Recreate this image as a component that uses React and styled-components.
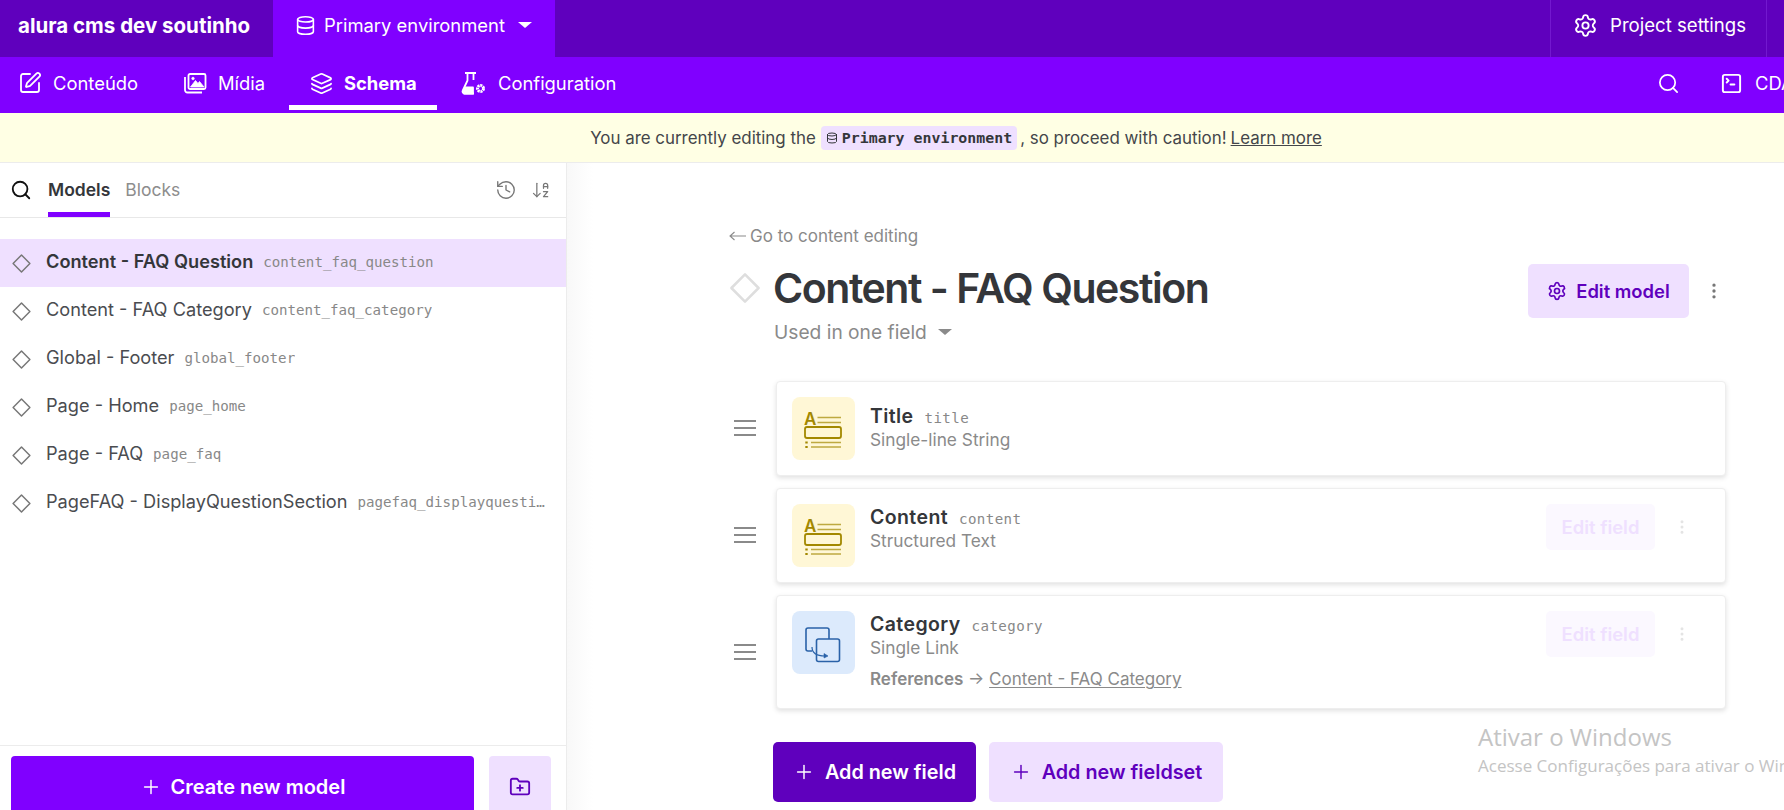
import React from 'react'
import styled, { createGlobalStyle } from 'styled-components'
import {
  SquarePen, Layers, Database, Settings, Search, SquareTerminal,
  History, ArrowDownAZ, Plus, FolderPlus, EllipsisVertical,
} from 'lucide-react'

const Global = createGlobalStyle`
  html, body { margin: 0; padding: 0; background: #fff; overflow: hidden; }
  body { font-family: Inter, "Liberation Sans", sans-serif; color: #34363a; }
  * { box-sizing: border-box; }
`

const Page = styled.div`
  width: 1784px;
  height: 810px;
  overflow: hidden;
  position: relative;
  display: flex;
  flex-direction: column;
`

const TopBar = styled.div`
  height: 57px;
  flex: none;
  background: #5f00bd;
  color: #fff;
  display: flex;
`
const Brand = styled.div`
  width: 273px;
  padding: 0 0 7px 18px;
  display: flex;
  align-items: center;
  font-size: 20.5px;
  font-weight: 700;
`
const EnvTab = styled.div`
  width: 282px;
  background: #8000ff;
  padding: 0 0 7px 22px;
  display: flex;
  align-items: center;
  gap: 8px;
  font-size: 18.4px;
  svg { flex: none; }
`
const Caret = styled.span`
  display: inline-block;
  width: 0;
  height: 0;
  margin-left: ${p => p.$gap || 5}px;
  border-left: ${p => p.$size || 7}px solid transparent;
  border-right: ${p => p.$size || 7}px solid transparent;
  border-top: ${p => (p.$size || 7) - 1}px solid currentColor;
`
const TopSpacer = styled.div`
  flex: 1;
`
const SettingsCell = styled.div`
  width: 217px;
  padding: 0 0 7px 22px;
  display: flex;
  align-items: center;
  gap: 12px;
  font-size: 18.6px;
  border-left: 1px solid #7318cf;
  border-right: 1px solid #7318cf;
`
const TopEnd = styled.div`
  width: 17px;
`

const NavBar = styled.div`
  height: 56px;
  flex: none;
  background: #8000ff;
  color: #fff;
  display: flex;
`
const NavItem = styled.div`
  height: 56px;
  width: ${p => p.$w}px;
  padding-left: ${p => p.$pad}px;
  padding-bottom: 4px;
  display: flex;
  align-items: center;
  gap: ${p => p.$gap || 11}px;
  font-size: 18.4px;
  font-weight: ${p => (p.$active ? 700 : 400)};
  box-shadow: ${p => (p.$active ? 'inset 0 -3px 0 #8000ff, inset 0 -8px 0 #fff' : 'none')};
  svg { flex: none; }
`
const NavRight = styled.div`
  margin-left: auto;
  width: 127px;
  padding-bottom: 4px;
  overflow: hidden;
  display: flex;
  align-items: center;
  white-space: nowrap;
  font-size: 18.4px;
  gap: 40px;
  svg { flex: none; }
`
const Cda = styled.span`
  display: inline-flex;
  align-items: center;
  gap: 12px;
`

const Notice = styled.div`
  height: 50px;
  flex: none;
  padding: 0 0 0 128px;
  background: #ffffe4;
  border-bottom: 1px solid #ececec;
  display: flex;
  align-items: center;
  justify-content: center;
  font-size: 16.9px;
  color: #44464a;
`
const EnvCode = styled.code`
  display: inline-flex;
  align-items: center;
  gap: 4px;
  height: 24px;
  margin: 0 3px 0 5px;
  padding: 0 5px;
  border-radius: 4px;
  background: #efe0ff;
  font-family: "DejaVu Sans Mono", monospace;
  font-size: 14.9px;
  font-weight: 700;
  color: #34363a;
`
const LearnMore = styled.a`
  margin-left: 4px;
  text-decoration: underline;
`

const Body = styled.div`
  flex: 1;
  min-height: 0;
  display: flex;
`

const Side = styled.aside`
  width: 567px;
  flex: none;
  border-right: 1px solid #ececec;
  display: flex;
  flex-direction: column;
`
const SideTabs = styled.div`
  height: 55px;
  flex: none;
  border-bottom: 1px solid #e8e8e8;
  display: flex;
  align-items: center;
  padding: 0 15px 0 10px;
`
const Tab = styled.div`
  height: 100%;
  margin-left: ${p => p.$ml}px;
  display: flex;
  align-items: center;
  font-size: 17.5px;
  font-weight: ${p => (p.$active ? 600 : 400)};
  color: ${p => (p.$active ? '#34363a' : '#8d8d8d')};
  box-shadow: ${p => (p.$active ? 'inset 0 -5px 0 #8000ff' : 'none')};
  padding-bottom: 2px;
`
const TabTools = styled.div`
  margin-left: auto;
  display: flex;
  align-items: center;
  gap: 14px;
  color: #777;
`
const ModelList = styled.div`
  flex: 1;
  padding-top: 21px;
`
const ModelRow = styled.div`
  height: 48px;
  padding: 0 18px 4px 11px;
  display: flex;
  align-items: center;
  white-space: nowrap;
  background: ${p => (p.$active ? '#efe0ff' : 'transparent')};
  font-size: 18.2px;
  font-weight: ${p => (p.$active ? 600 : 400)};
  color: ${p => (p.$active ? '#34363a' : '#4a4c50')};
  svg { flex: none; margin-right: 14px; margin-top: 4px; }
`
const ApiKey = styled.span`
  font-family: "DejaVu Sans Mono", monospace;
  font-size: 14.15px;
  line-height: 1.5;
  font-weight: 400;
  color: #888;
  margin-left: ${p => p.$ml || 10}px;
  padding-top: 3px;
  overflow: hidden;
  text-overflow: ellipsis;
`
const SideFooter = styled.div`
  height: 65px;
  flex: none;
  overflow: hidden;
  border-top: 1px solid #ececec;
  padding: 10px 15px 0 11px;
  display: flex;
  gap: 15px;
`
const CreateButton = styled.div`
  flex: 1;
  height: 70px;
  border-radius: 4px;
  background: #8000ff;
  color: #fff;
  font-size: 20px;
  font-weight: 600;
  display: flex;
  align-items: center;
  justify-content: center;
  gap: 9px;
  padding-bottom: 8px;
`
const FolderButton = styled.div`
  width: 62px;
  height: 70px;
  border-radius: 4px;
  background: #efe0ff;
  color: #5f00bd;
  display: flex;
  align-items: center;
  justify-content: center;
  padding-bottom: 8px;
`

const Main = styled.main`
  flex: 1;
  min-width: 0;
  padding: 63px 45px 0 162px;
  background: linear-gradient(90deg, #f8f8f8 0, #fff 26px);
`
const BackLink = styled.div`
  height: 20px;
  display: flex;
  align-items: center;
  gap: 4px;
  font-size: 17px;
  color: #8a8a8a;
`
const Heading = styled.div`
  margin-top: 15px;
  height: 54px;
  display: flex;
  align-items: center;
  svg { flex: none; }
`
const HeadingMark = styled.span`
  display: flex;
  margin: 0 11px 0 -1px;
`
const Title = styled.h1`
  margin: 0;
  font-size: 41px;
  font-weight: 600;
  letter-spacing: -1.45px;
  color: #34363a;
  white-space: nowrap;
`
const EditModel = styled.div`
  margin: 5px 0 0 auto;
  width: 161px;
  height: 54px;
  border-radius: 5px;
  background: #efe0ff;
  color: #5f00bd;
  display: flex;
  align-items: center;
  justify-content: center;
  gap: 9px;
  font-size: 18.4px;
  font-weight: 600;
`
const MoreButton = styled.span`
  width: 50px;
  margin-top: 5px;
  flex: none;
  display: flex;
  justify-content: center;
  color: #777;
`
const UsedIn = styled.div`
  margin: 2px 0 0 45px;
  height: 30px;
  display: flex;
  align-items: center;
  font-size: 19.2px;
  color: #8a8a8a;
`
const Fields = styled.div`
  margin-top: 34px;
  display: flex;
  flex-direction: column;
  gap: 12px;
`
const FieldRow = styled.div`
  display: flex;
  align-items: center;
`
const Handle = styled.div`
  width: 47px;
  flex: none;
  padding: 0 0 1px 4px;
  color: #8a8a8a;
`
const Card = styled.div`
  width: 950px;
  min-height: ${p => p.$h}px;
  padding: 15px 16px 0 15px;
  border: 1px solid #eeeeee;
  border-radius: 4px;
  background: #fff;
  box-shadow: 0 2px 5px rgba(0, 0, 0, 0.12);
  display: flex;
  align-items: flex-start;
`
const Tile = styled.div`
  width: 63px;
  height: 63px;
  flex: none;
  border-radius: 8px;
  background: ${p => p.$bg};
`
const FieldText = styled.div`
  margin-left: 15px;
  padding-top: ${p => (p.$low ? 7 : 1)}px;
  flex: 1;
  line-height: 1;
`
const FieldName = styled.div`
  display: flex;
  align-items: baseline;
  font-size: 19.5px;
  font-weight: 600;
  letter-spacing: 0.4px;
  height: 24px;
  padding-top: 1px;
  color: #34363a;
`
const FieldType = styled.div`
  margin-top: 3px;
  font-size: 17.3px;
  color: #8a8a8a;
`
const Refs = styled.div`
  margin-top: 15px;
  font-size: 17px;
  color: #8a8a8a;
  b { font-weight: 600; }
  u { text-underline-offset: 2px; }
`
const EditField = styled.div`
  width: 109px;
  height: 46px;
  flex: none;
  border-radius: 5px;
  background: #fbf8ff;
  color: #efe0ff;
  display: flex;
  align-items: center;
  justify-content: center;
  font-size: 18.4px;
  font-weight: 600;
`
const FaintDots = styled.div`
  width: 54px;
  height: 46px;
  display: flex;
  align-items: center;
  justify-content: center;
  color: #e4e4e4;
`
const Actions = styled.div`
  margin: 33px 0 0 44px;
  display: flex;
  gap: 13px;
`
const ActionButton = styled.div`
  height: 60px;
  width: ${p => p.$w}px;
  border-radius: 5px;
  background: ${p => (p.$primary ? '#5f00bd' : '#efe0ff')};
  color: ${p => (p.$primary ? '#fff' : '#5f00bd')};
  display: flex;
  align-items: center;
  justify-content: center;
  gap: 10px;
  font-size: 19.8px;
  font-weight: 600;
`
const Watermark = styled.div`
  position: absolute;
  left: 1478px;
  top: 721px;
  width: 340px;
  color: #c4c4c4;
  font-family: "Open Sans", sans-serif;
  white-space: nowrap;
`
const WatermarkHead = styled.div`
  font-size: 24px;
  line-height: 32px;
`
const WatermarkSub = styled.div`
  font-size: 17px;
  line-height: 26px;
`

const Diamond = ({ size = 21, stroke = '#777', width = 1.4 }) => (
  <svg width={size} height={size} viewBox="0 0 20 20" fill="none">
    <path d="M10 2 L18 10 L10 18 L2 10 Z" stroke={stroke} strokeWidth={width} strokeLinejoin="round" />
  </svg>
)

const Burger = () => (
  <svg width="24" height="18" viewBox="0 0 24 18" fill="none" stroke="currentColor" strokeWidth="2" style={{ display: 'block' }}>
    <path d="M1 2 H23 M1 9 H23 M1 16 H23" />
  </svg>
)

const LongArrow = () => (
  <svg width="17" height="12" viewBox="0 0 17 12" fill="none" stroke="currentColor" strokeWidth="1.1">
    <path d="M17 6 H1 M5.5 2 L1 6 L5.5 10" />
  </svg>
)

const PhotoStack = () => (
  <svg width="24" height="24" viewBox="0 0 24 24" fill="none" stroke="#fff" strokeWidth="1.8" strokeLinejoin="round">
    <path d="M2 6 V19 A2.5 2.5 0 0 0 4.5 21.5 H19" />
    <rect x="5.5" y="3" width="17" height="15" rx="1.5" />
    <circle cx="10" cy="7.5" r="1.3" fill="#fff" strokeWidth="0.6" />
    <path d="M7.5 16 L12.5 9.5 L15 12.5 L16.5 10.5 L21 16 Z" fill="#fff" stroke="#fff" strokeWidth="0.8" />
  </svg>
)

const FlaskGear = () => (
  <svg width="26" height="24" viewBox="0 0 26 24" fill="none" stroke="#fff" strokeWidth="1.8" strokeLinejoin="round">
    <path d="M4 2 H15 M6.5 2 V9.5 L1.8 19.5 C1 21 2 22.5 3.5 22.5 H13 M12.5 2 V9" />
    <path d="M4 16.5 H12 V22.5 H3 L2.5 20 Z" fill="#fff" />
    <circle cx="19.5" cy="17.5" r="3" strokeWidth="3" strokeDasharray="2 .7" />
  </svg>
)

const TextFieldIcon = () => (
  <svg width="63" height="63" viewBox="0 0 63 63" fill="none" stroke="#a38800">
    <text x="12" y="27.5" fontSize="17" fontWeight="600" fontFamily="Inter, sans-serif" fill="#a38800" stroke="none">A</text>
    <path d="M25.5 20.5 H49 M25.5 25.5 H49 M19 45.5 H49 M19 50 H49" strokeOpacity="0.7" strokeWidth="1.4" />
    <rect x="13" y="30" width="36" height="11" rx="2" strokeWidth="1.8" />
    <path d="M14.5 44.5 V46.5 M14.5 49 V51" strokeWidth="2.4" />
  </svg>
)

const LinkFieldIcon = () => (
  <svg width="63" height="63" viewBox="0 0 63 63" fill="none" stroke="#2a62a8" strokeWidth="1.6">
    <path d="M20 40 H16 A2 2 0 0 1 14 38 V19 A2 2 0 0 1 16 17 H35 A2 2 0 0 1 37 19 V28" />
    <rect x="24.5" y="28" width="23" height="22.5" rx="2" />
    <path d="M20 36 C20 42 25 45 33 45" strokeWidth="1.2" />
    <path d="M32 42.5 L36 45 L32 47 Z" fill="#2a62a8" strokeWidth="0.6" />
  </svg>
)

const models = [
  { name: 'Content - FAQ Question', api: 'content_faq_question', active: true },
  { name: 'Content - FAQ Category', api: 'content_faq_category' },
  { name: 'Global - Footer', api: 'global_footer' },
  { name: 'Page - Home', api: 'page_home' },
  { name: 'Page - FAQ', api: 'page_faq' },
  { name: 'PageFAQ - DisplayQuestionSection', api: 'pagefaq_displayquestionsection' },
]

const Field = ({ name, api, type, tile, icon, refs, actions, height = 95 }) => (
  <FieldRow>
    <Handle><Burger /></Handle>
    <Card $h={height}>
      <Tile $bg={tile}>{icon}</Tile>
      <FieldText $low={!actions}>
        <FieldName>{name}<ApiKey $ml={11}>{api}</ApiKey></FieldName>
        <FieldType>{type}</FieldType>
        {refs && <Refs><b>References</b> → <u>{refs}</u></Refs>}
      </FieldText>
      {actions && <EditField>Edit field</EditField>}
      {actions && <FaintDots><EllipsisVertical size={18} /></FaintDots>}
    </Card>
  </FieldRow>
)

function App() {
  return (
    <Page>
      <Global />
      <TopBar>
        <Brand>alura cms dev soutinho</Brand>
        <EnvTab>
          <Database size={21} strokeWidth={1.8} />
          Primary environment
          <Caret />
        </EnvTab>
        <TopSpacer />
        <SettingsCell>
          <Settings size={25} strokeWidth={1.8} />
          Project settings
        </SettingsCell>
        <TopEnd />
      </TopBar>

      <NavBar>
        <NavItem $w={183} $pad={18}><SquarePen size={24} strokeWidth={1.8} />Conteúdo</NavItem>
        <NavItem $w={106} $pad={0}><PhotoStack />Mídia</NavItem>
        <NavItem $w={148} $pad={21} $active><Layers size={23} strokeWidth={1.8} />Schema</NavItem>
        <NavItem $w={200} $pad={24}><FlaskGear />Configuration</NavItem>
        <NavRight>
          <Search size={23} strokeWidth={1.8} />
          <Cda><SquareTerminal size={23} strokeWidth={2} />CDA Playground</Cda>
        </NavRight>
      </NavBar>

      <Notice>
        You are currently editing the
        <EnvCode><Database size={12} strokeWidth={2} />Primary environment</EnvCode>
        , so proceed with caution!
        <LearnMore>Learn more</LearnMore>
      </Notice>

      <Body>
        <Side>
          <SideTabs>
            <Search size={22} color="#111" strokeWidth={2} />
            <Tab $ml={16} $active>Models</Tab>
            <Tab $ml={15}>Blocks</Tab>
            <TabTools>
              <History size={22} strokeWidth={1.5} />
              <ArrowDownAZ size={20} strokeWidth={1.5} />
            </TabTools>
          </SideTabs>
          <ModelList>
            {models.map(m => (
              <ModelRow key={m.api} $active={m.active}>
                <Diamond />
                {m.name}
                <ApiKey>{m.api}</ApiKey>
              </ModelRow>
            ))}
          </ModelList>
          <SideFooter>
            <CreateButton><Plus size={22} strokeWidth={1.6} />Create new model</CreateButton>
            <FolderButton><FolderPlus size={22} strokeWidth={2} /></FolderButton>
          </SideFooter>
        </Side>

        <Main>
          <BackLink><LongArrow />Go to content editing</BackLink>
          <Heading>
            <HeadingMark><Diamond size={34} stroke="#dedede" width={1.5} /></HeadingMark>
            <Title>Content - FAQ Question</Title>
            <EditModel><Settings size={20} strokeWidth={2} />Edit model</EditModel>
            <MoreButton><EllipsisVertical size={20} /></MoreButton>
          </Heading>
          <UsedIn>Used in one field<Caret $gap={11} $size={7} /></UsedIn>
          <Fields>
            <Field name="Title" api="title" type="Single-line String" tile="#fff7d6" icon={<TextFieldIcon />} />
            <Field name="Content" api="content" type="Structured Text" tile="#fff7d6" icon={<TextFieldIcon />} actions />
            <Field name="Category" api="category" type="Single Link" tile="#dceafc" icon={<LinkFieldIcon />} refs="Content - FAQ Category" actions height={114} />
          </Fields>
          <Actions>
            <ActionButton $primary $w={203}><Plus size={22} strokeWidth={1.6} />Add new field</ActionButton>
            <ActionButton $w={234}><Plus size={22} strokeWidth={1.6} />Add new fieldset</ActionButton>
          </Actions>
        </Main>
      </Body>

      <Watermark>
        <WatermarkHead>Ativar o Windows</WatermarkHead>
        <WatermarkSub>Acesse Configurações para ativar o Windows.</WatermarkSub>
      </Watermark>
    </Page>
  )
}

export default App
